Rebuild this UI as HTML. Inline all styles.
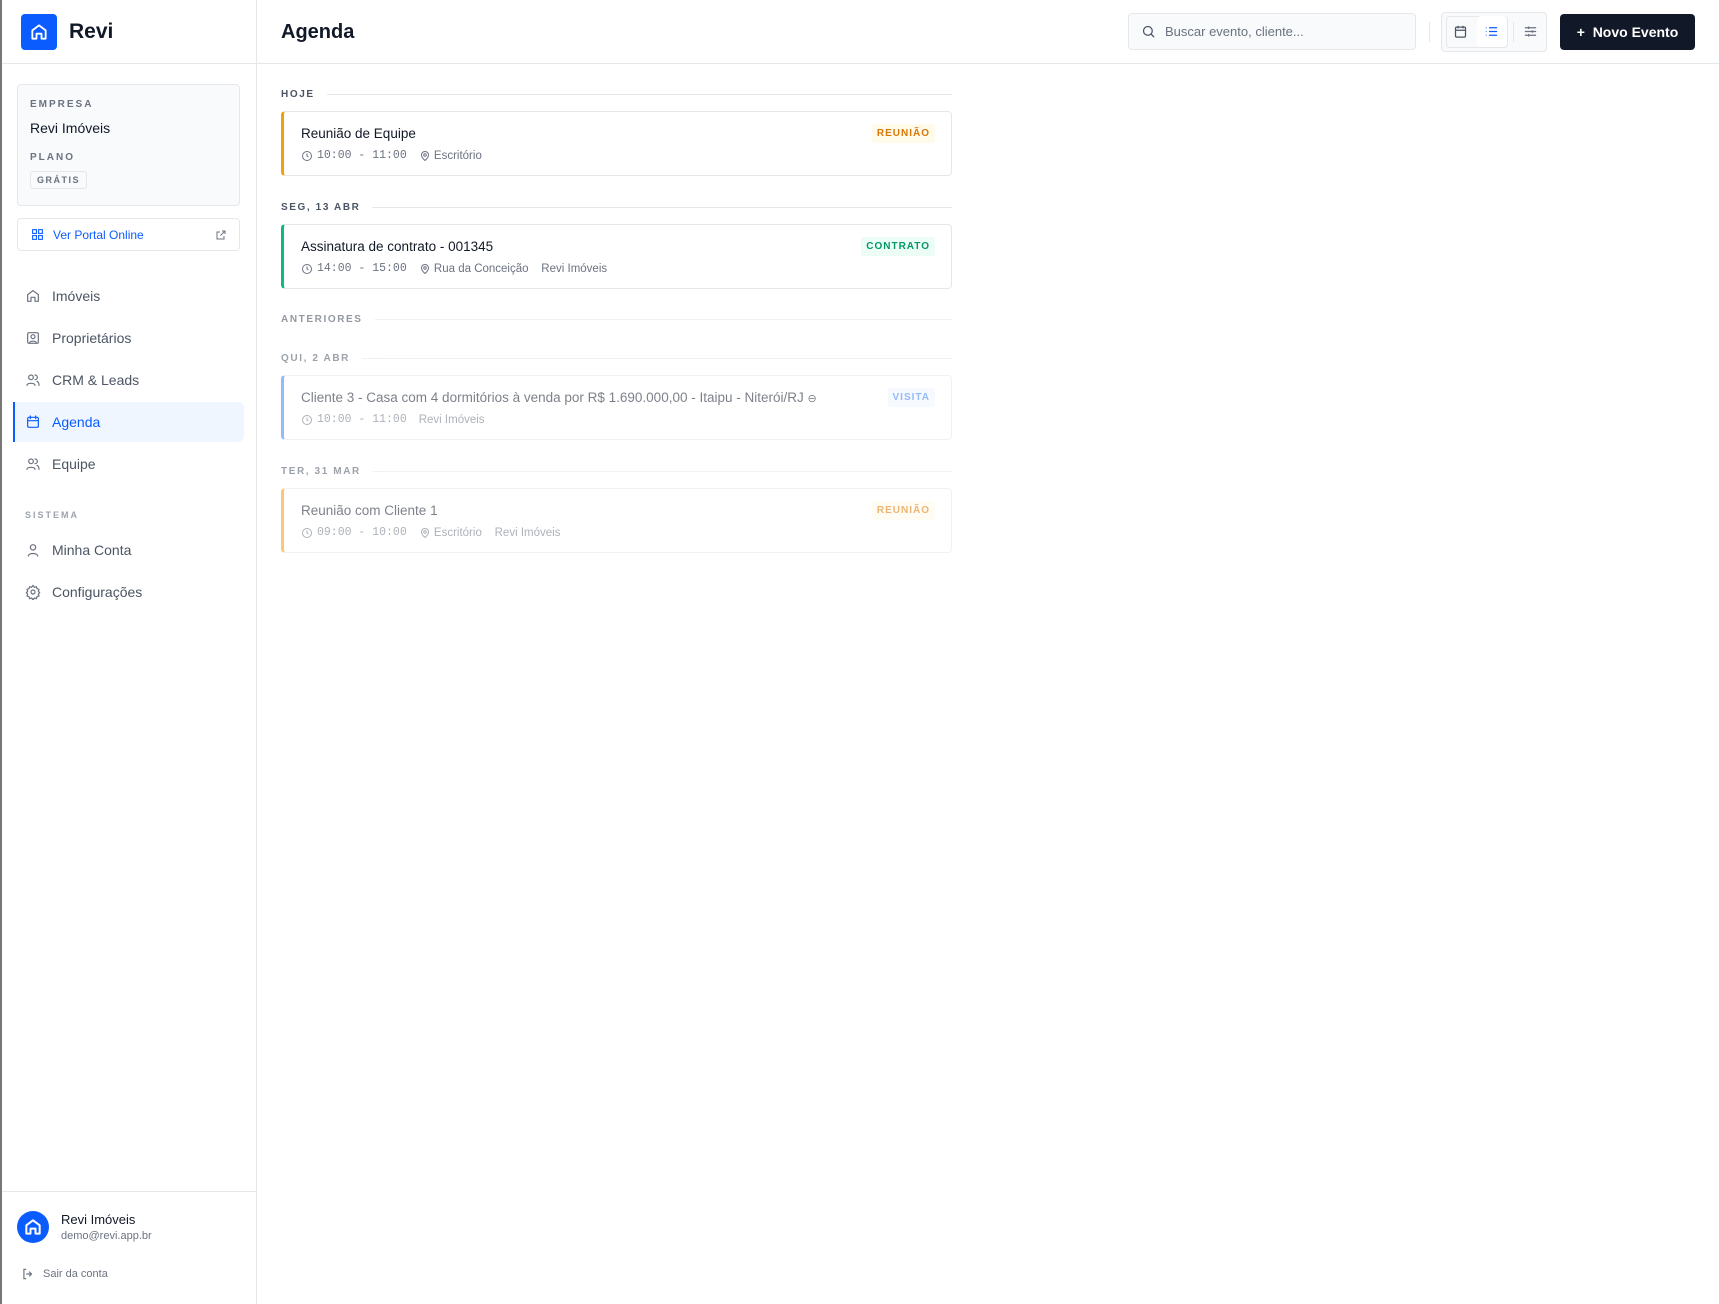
<!DOCTYPE html>
<html><head><meta charset="utf-8"><style>
*{box-sizing:border-box;margin:0;padding:0}
body{width:1719px;height:1304px;font-family:"Liberation Sans",sans-serif;background:#fff;position:relative;overflow:hidden;color:#111827}
.abs{position:absolute}
.side{left:0;top:0;width:257px;height:1304px;border-right:1px solid #e5e7eb;border-left:2px solid #777;background:#fff}
.hline{height:1px;background:#e5e7eb}
.lbl{font-size:10px;font-weight:700;letter-spacing:2px;color:#6b7280}
.nav{position:absolute;left:13px;width:231px;height:40px;display:flex;align-items:center;padding-left:12px;font-size:14px;color:#4b5563;border-radius:6px}
.nav svg{width:16px;height:16px;margin-right:11px;stroke:#6b7280;fill:none;stroke-width:1.8;stroke-linecap:round;stroke-linejoin:round}
.sec{position:absolute;left:281px;width:671px;display:flex;align-items:center;font-size:10px;font-weight:700;letter-spacing:1.6px;color:#4b5563}
.sec:after{content:"";flex:1;height:1px;background:#e5e7eb;margin-left:12px}
.card{position:absolute;left:281px;width:671px;height:65px;border:1px solid #e5e7eb;border-left:3px solid;border-radius:4px;background:#fff}
.card .t{position:absolute;left:17px;top:14px;font-size:13.5px;color:#111827}
.card .m{position:absolute;left:17px;top:37px;font-size:11.5px;color:#6b7280;display:flex;align-items:center}
.mono{font-family:"Liberation Mono",monospace;font-size:11.5px;margin-left:4px;margin-right:12px}
.card svg{width:12px;height:12px;fill:none;stroke:currentColor;stroke-width:2}
.badge{position:absolute;right:16px;top:12px;font-size:10px;font-weight:700;letter-spacing:1px;padding:4px 5px;border-radius:3px}
.dim{opacity:.55}
</style></head><body>
<div class="abs side"></div>
<div class="abs" style="left:21px;top:14px;width:36px;height:36px;background:#0b5cff;border-radius:4px;display:flex;align-items:center;justify-content:center">
<svg width="20" height="20" viewBox="0 0 24 24" fill="none" stroke="#fff" stroke-width="2.2" stroke-linejoin="round"><path d="M4 10l8-6 8 6v10H15v-6h-6v6H4z"/></svg></div>
<div class="abs" style="left:69px;top:20px;font-size:21px;font-weight:700">Revi</div>
<div class="abs hline" style="left:2px;top:63px;width:1717px"></div>
<div class="abs" style="left:256px;top:0;width:1px;height:1304px;background:#e5e7eb"></div>
<div class="abs" style="left:281px;top:21px;font-size:20px;font-weight:700">Agenda</div>

<div class="abs" style="left:17px;top:84px;width:223px;height:122px;background:#f8fafc;border:1px solid #e5e7eb;border-radius:4px"></div>
<div class="abs lbl" style="left:30px;top:99px">EMPRESA</div>
<div class="abs" style="left:30px;top:120px;font-size:14px">Revi Imóveis</div>
<div class="abs lbl" style="left:30px;top:152px">PLANO</div>
<div class="abs" style="left:30px;top:171px;border:1px solid #e5e7eb;border-radius:3px;padding:3px 6px;font-size:9px;font-weight:700;letter-spacing:1.5px;color:#6b7280;background:#f8fafc">GRÁTIS</div>
<div class="abs" style="left:17px;top:218px;width:223px;height:33px;border:1px solid #e5e7eb;border-radius:4px;display:flex;align-items:center;padding-left:13px;font-size:12px;color:#0b5cff">
<svg width="13" height="13" viewBox="0 0 24 24" fill="none" stroke="#0b5cff" stroke-width="2"><rect x="3" y="3" width="7" height="7"/><rect x="14" y="3" width="7" height="7"/><rect x="3" y="14" width="7" height="7"/><rect x="14" y="14" width="7" height="7"/></svg><span style="margin-left:9px">Ver Portal Online</span>
<svg style="position:absolute;right:12px" width="12" height="12" viewBox="0 0 24 24" fill="none" stroke="#6b7280" stroke-width="2"><path d="M14 4h6v6M20 4l-9 9M18 14v6H4V6h6"/></svg></div>

<div class="nav" style="top:276px"><svg viewBox="0 0 24 24"><path d="M4 10l8-6 8 6v10H15v-6h-6v6H4z"/></svg>Imóveis</div>
<div class="nav" style="top:318px"><svg viewBox="0 0 24 24"><rect x="4" y="4" width="16" height="16" rx="2"/><circle cx="12" cy="10" r="3"/><path d="M7 19c1-3 9-3 10 0"/></svg>Proprietários</div>
<div class="nav" style="top:360px"><svg viewBox="0 0 24 24"><circle cx="9" cy="8" r="3.5"/><path d="M3 20c0-4 12-4 12 0M15 4.5a3.5 3.5 0 010 7M18 14c2 1 3 3 3 6"/></svg>CRM &amp; Leads</div>
<div class="nav" style="top:402px;background:#eff6ff;color:#0b5cff;border-left:2px solid #0b5cff;border-radius:0 6px 6px 0;padding-left:10px"><svg viewBox="0 0 24 24" style="stroke:#0b5cff"><rect x="4" y="5" width="16" height="15" rx="2"/><path d="M4 10h16M8 3v4M16 3v4"/></svg>Agenda</div>
<div class="nav" style="top:444px"><svg viewBox="0 0 24 24"><circle cx="9" cy="8" r="3.5"/><path d="M3 20c0-4 12-4 12 0M15 4.5a3.5 3.5 0 010 7M18 14c2 1 3 3 3 6"/></svg>Equipe</div>
<div class="abs lbl" style="left:25px;top:510px;color:#9ca3af;font-size:9px">SISTEMA</div>
<div class="nav" style="top:530px"><svg viewBox="0 0 24 24"><circle cx="12" cy="8" r="4"/><path d="M5 21c0-5 14-5 14 0"/></svg>Minha Conta</div>
<div class="nav" style="top:572px"><svg viewBox="0 0 24 24"><circle cx="12" cy="12" r="3"/><path d="M12 2l2 3 3-1 1 3 3 1-1 3 2 2-2 2 1 3-3 1-1 3-3-1-2 3-2-3-3 1-1-3-3-1 1-3-2-2 2-2-1-3 3-1 1-3 3 1z"/></svg>Configurações</div>

<div class="abs hline" style="left:2px;top:1191px;width:254px"></div>
<div class="abs" style="left:17px;top:1211px;width:32px;height:32px;border-radius:50%;background:#0b5cff;display:flex;align-items:center;justify-content:center"><svg width="20" height="20" viewBox="0 0 24 24" fill="none" stroke="#fff" stroke-width="2.4" stroke-linejoin="round"><path d="M4 10l8-6 8 6v10H15v-6h-6v6H4z"/></svg></div>
<div class="abs" style="left:61px;top:1212px;font-size:13px">Revi Imóveis</div>
<div class="abs" style="left:61px;top:1230px;font-size:11px;color:#6b7280">demo@revi.app.br</div>
<div class="abs" style="left:21px;top:1267px;font-size:11px;color:#6b7280;display:flex;align-items:center"><svg width="14" height="14" viewBox="0 0 24 24" fill="none" stroke="#6b7280" stroke-width="2"><path d="M9 4H5v16h4M14 8l4 4-4 4M18 12H9"/></svg><span style="margin-left:8px">Sair da conta</span></div>

<div class="abs" style="left:1128px;top:13px;width:288px;height:37px;border:1px solid #e5e7eb;border-radius:4px;background:#f8fafc;display:flex;align-items:center;padding-left:12px;font-size:13px;color:#6b7280"><svg width="15" height="15" viewBox="0 0 24 24" fill="none" stroke="#4b5563" stroke-width="2"><circle cx="11" cy="11" r="7"/><path d="M16 16l5 5"/></svg><span style="margin-left:9px">Buscar evento, cliente...</span></div>
<div class="abs" style="left:1429px;top:22px;width:1px;height:20px;background:#e5e7eb"></div>
<div class="abs" style="left:1441px;top:12px;width:106px;height:40px;border:1px solid #e5e7eb;border-radius:4px;background:#f8fafc"></div>
<div class="abs" style="left:1446px;top:16px;width:62px;height:32px;border:1px solid #e5e7eb;border-radius:4px;background:#f8fafc"></div>
<div class="abs" style="left:1477px;top:16px;width:30px;height:31px;background:#fff;border-radius:4px"></div>
<svg class="abs" style="left:1453px;top:24px" width="15" height="15" viewBox="0 0 24 24" fill="none" stroke="#4b5563" stroke-width="2"><rect x="4" y="5" width="16" height="16" rx="2"/><path d="M4 10h16M8 3v4M16 3v4"/></svg>
<svg class="abs" style="left:1484px;top:24px" width="15" height="15" viewBox="0 0 24 24" fill="none" stroke="#0b5cff" stroke-width="2"><path d="M8 6h13M8 12h13M8 18h13M3 6h1M3 12h1M3 18h1"/></svg>
<div class="abs" style="left:1513px;top:22px;width:1px;height:20px;background:#e5e7eb"></div>
<svg class="abs" style="left:1523px;top:24px" width="15" height="15" viewBox="0 0 24 24" fill="none" stroke="#6b7280" stroke-width="2"><path d="M3 6h18M3 12h18M3 18h18M9 4v4M15 10v4M9 16v4"/></svg>
<div class="abs" style="left:1560px;top:14px;width:135px;height:36px;background:#111827;border-radius:4px;color:#fff;font-size:14px;font-weight:700;display:flex;align-items:center;justify-content:center">+&nbsp; Novo Evento</div>

<div class="sec" style="top:89px">HOJE</div>
<div class="card" style="top:111px;border-left-color:#f59e0b"><div class="t">Reunião de Equipe</div><div class="m"><svg viewBox="0 0 24 24"><circle cx="12" cy="12" r="9"/><path d="M12 7v5l3 2"/></svg><span class="mono">10:00 - 11:00</span><svg viewBox="0 0 24 24"><path d="M12 21s-7-6-7-11a7 7 0 0114 0c0 5-7 11-7 11z"/><circle cx="12" cy="10" r="2.5"/></svg>&nbsp;Escritório</div><div class="badge" style="color:#d97706;background:#fffbeb">REUNIÃO</div></div>
<div class="sec" style="top:202px">SEG, 13 ABR</div>
<div class="card" style="top:224px;border-left-color:#10b981"><div class="t">Assinatura de contrato - 001345</div><div class="m"><svg viewBox="0 0 24 24"><circle cx="12" cy="12" r="9"/><path d="M12 7v5l3 2"/></svg><span class="mono">14:00 - 15:00</span><svg viewBox="0 0 24 24"><path d="M12 21s-7-6-7-11a7 7 0 0114 0c0 5-7 11-7 11z"/><circle cx="12" cy="10" r="2.5"/></svg>&nbsp;Rua da Conceição&nbsp;&nbsp;&nbsp;&nbsp;Revi Imóveis</div><div class="badge" style="color:#059669;background:#ecfdf5">CONTRATO</div></div>
<div class="sec dim" style="top:314px;opacity:.6">ANTERIORES</div>
<div class="sec dim" style="top:353px">QUI, 2 ABR</div>
<div class="card dim" style="top:375px;border-left-color:#3b82f6"><div class="t">Cliente 3 - Casa com 4 dormitórios à venda por R$ 1.690.000,00 - Itaipu - Niterói/RJ <span style="font-size:11px">⊖</span></div><div class="m"><svg viewBox="0 0 24 24"><circle cx="12" cy="12" r="9"/><path d="M12 7v5l3 2"/></svg><span class="mono">10:00 - 11:00</span>Revi Imóveis</div><div class="badge" style="color:#3b82f6;background:#eff6ff">VISITA</div></div>
<div class="sec dim" style="top:466px">TER, 31 MAR</div>
<div class="card dim" style="top:488px;border-left-color:#f59e0b"><div class="t">Reunião com Cliente 1</div><div class="m"><svg viewBox="0 0 24 24"><circle cx="12" cy="12" r="9"/><path d="M12 7v5l3 2"/></svg><span class="mono">09:00 - 10:00</span><svg viewBox="0 0 24 24"><path d="M12 21s-7-6-7-11a7 7 0 0114 0c0 5-7 11-7 11z"/><circle cx="12" cy="10" r="2.5"/></svg>&nbsp;Escritório&nbsp;&nbsp;&nbsp;&nbsp;Revi Imóveis</div><div class="badge" style="color:#d97706;background:#fffbeb">REUNIÃO</div></div>
</body></html>
